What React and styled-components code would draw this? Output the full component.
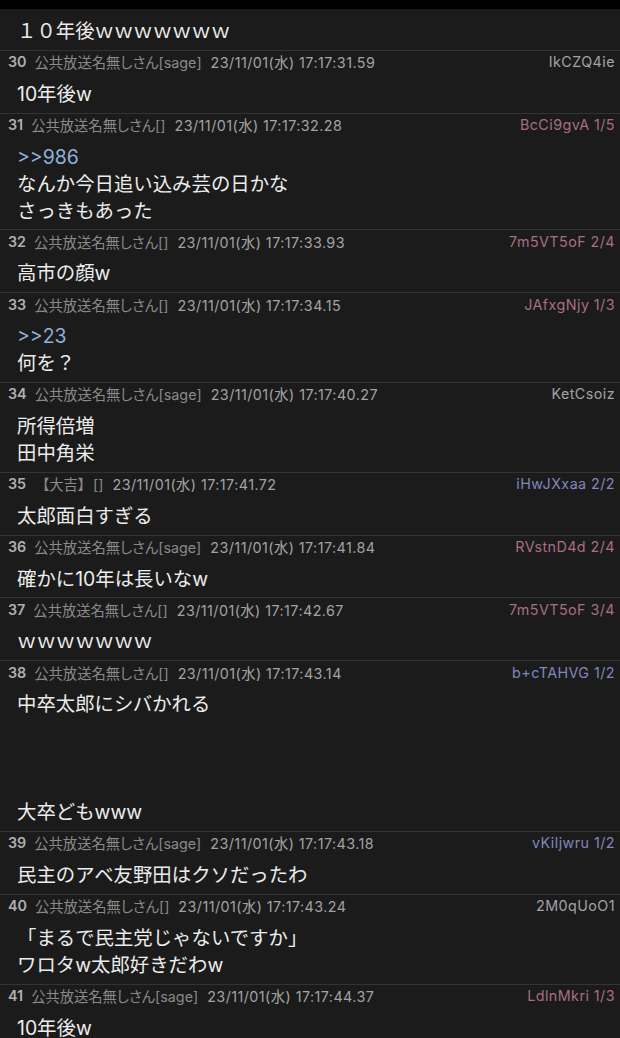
import React from "react";
import styled, { createGlobalStyle } from "styled-components";

const GlobalStyle = createGlobalStyle`
  html, body {
    margin: 0;
    padding: 0;
    background: #1b1b1b;
    overflow: hidden;
  }
`;

const Page = styled.div`
  width: 620px;
  height: 1038px;
  overflow: hidden;
  background: #1b1b1b;
  font-family: "Inter", "Noto Sans CJK JP", sans-serif;
`;

const StatusBar = styled.div`
  height: 9px;
  background: #000;
`;

const Post = styled.div`
  border-top: ${(props) => (props.first ? "none" : "1px solid #333")};
`;

const Header = styled.div`
  display: flex;
  align-items: center;
  height: 22px;
  padding: 0 5px 0 8px;
  font-size: 14.3px;
  font-feature-settings: "palt";
  white-space: pre;
`;

const Num = styled.span`
  color: #b0b0b0;
  font-weight: 600;
  margin-right: 8px;
`;

const Name = styled.span`
  color: #8a8a8a;
  margin-right: 9px;
`;

const Date = styled.span`
  color: #a3a3a3;
  letter-spacing: 0.45px;
`;

const Id = styled.span`
  margin-left: auto;
  color: ${(props) => props.tone};
  letter-spacing: 0.45px;
`;

const Body = styled.div`
  padding: ${(props) => (props.first ? "9px" : "8px")} 12px 4.8px 17px;
  color: #ececec;
  font-size: 19.4px;
  line-height: 27px;
`;

const Line = styled.div`
  min-height: 27px;
  color: ${(props) => (props.anchor ? "#8fb1dc" : "inherit")};
`;

const GREY = "#a3a3a3";
const PINK = "#a96e82";
const BLUE = "#8088bd";

const posts = [
  { num: 30, name: "公共放送名無しさん", mail: "sage", time: "17:17:31.59", id: "IkCZQ4ie", tone: GREY, lines: ["10年後w"] },
  { num: 31, name: "公共放送名無しさん", mail: "", time: "17:17:32.28", id: "BcCi9gvA 1/5", tone: PINK, lines: [">>986", "なんか今日追い込み芸の日かな", "さっきもあった"] },
  { num: 32, name: "公共放送名無しさん", mail: "", time: "17:17:33.93", id: "7m5VT5oF 2/4", tone: PINK, lines: ["高市の顔w"] },
  { num: 33, name: "公共放送名無しさん", mail: "", time: "17:17:34.15", id: "JAfxgNjy 1/3", tone: PINK, lines: [">>23", "何を？"] },
  { num: 34, name: "公共放送名無しさん", mail: "sage", time: "17:17:40.27", id: "KetCsoiz", tone: GREY, lines: ["所得倍増", "田中角栄"] },
  { num: 35, name: "  【大吉】  ", mail: "", time: "17:17:41.72", id: "iHwJXxaa 2/2", tone: BLUE, lines: ["太郎面白すぎる"] },
  { num: 36, name: "公共放送名無しさん", mail: "sage", time: "17:17:41.84", id: "RVstnD4d 2/4", tone: PINK, lines: ["確かに10年は長いなw"] },
  { num: 37, name: "公共放送名無しさん", mail: "", time: "17:17:42.67", id: "7m5VT5oF 3/4", tone: PINK, lines: ["ｗｗｗｗｗｗｗ"] },
  { num: 38, name: "公共放送名無しさん", mail: "", time: "17:17:43.14", id: "b+cTAHVG 1/2", tone: BLUE, lines: ["中卒太郎にシバかれる", "", "", "", "大卒どもwww"] },
  { num: 39, name: "公共放送名無しさん", mail: "sage", time: "17:17:43.18", id: "vKiljwru 1/2", tone: BLUE, lines: ["民主のアベ友野田はクソだったわ"] },
  { num: 40, name: "公共放送名無しさん", mail: "", time: "17:17:43.24", id: "2M0qUoO1", tone: GREY, lines: ["「まるで民主党じゃないですか」", "ワロタw太郎好きだわw"] },
  { num: 41, name: "公共放送名無しさん", mail: "sage", time: "17:17:44.37", id: "LdlnMkri 1/3", tone: PINK, lines: ["10年後w"] },
];

const Lines = ({ lines }) =>
  lines.map((text, i) => (
    <Line key={i} anchor={text.startsWith(">>") ? 1 : 0}>
      {text}
    </Line>
  ));

const App = () => {
  return (
    <>
      <GlobalStyle />
      <Page>
        <StatusBar />
        <Post first>
          <Body first>
            <Lines lines={["１０年後ｗｗｗｗｗｗｗ"]} />
          </Body>
        </Post>
        {posts.map((p) => (
          <Post key={p.num}>
            <Header>
              <Num>{p.num}</Num>
              <Name>{`${p.name}[${p.mail}]`}</Name>
              <Date>{`23/11/01(水) ${p.time}`}</Date>
              <Id tone={p.tone}>{p.id}</Id>
            </Header>
            <Body>
              <Lines lines={p.lines} />
            </Body>
          </Post>
        ))}
      </Page>
    </>
  );
};

export default App;
